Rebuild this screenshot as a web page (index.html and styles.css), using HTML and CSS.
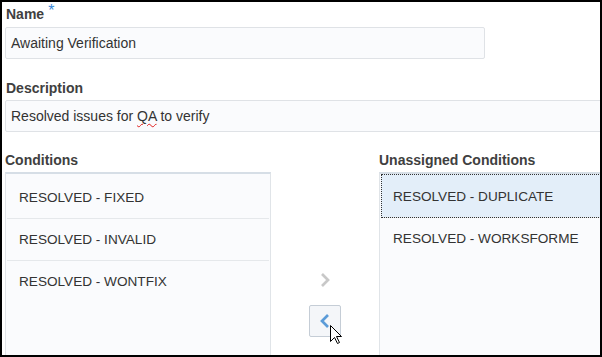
FILE: index.html
```html
<!DOCTYPE html>
<html lang="en">
<head>
    <meta charset="UTF-8">
    <title>Edit Status</title>
    <link rel="stylesheet" href="styles.css">
</head>
<body>
    <div class="frame">
        <div class="form">
            <label class="field-label">Name<span class="req">*</span></label>
            <div class="text-input name-input">Awaiting Verification</div>

            <label class="field-label desc-label">Description</label>
            <div class="text-input desc-input">Resolved issues for <span class="misspelt">QA</span> to verify</div>

            <div class="shuttle">
                <div class="list-label">Conditions</div>
                <div></div>
                <div class="list-label">Unassigned Conditions</div>

                <ul class="cond-list">
                    <li>RESOLVED - FIXED</li>
                    <li>RESOLVED - INVALID</li>
                    <li>RESOLVED - WONTFIX</li>
                </ul>

                <div class="shuttle-buttons">
                    <button class="move-btn">
                        <svg width="30" height="30" viewBox="0 0 30 30"><polyline points="12,9 18,15 12,21" fill="none" stroke="#c8c8c8" stroke-width="2.7"/></svg>
                    </button>
                    <button class="move-btn active">
                        <svg width="30" height="30" viewBox="0 0 30 30"><polyline points="18,9 12,15 18,21" fill="none" stroke="#5b9bd8" stroke-width="2.7"/></svg>
                        <!-- mouse pointer -->
                        <svg class="cursor" width="13" height="20" viewBox="0 0 13 20"><path d="M0.5 0.5 L0.5 16.5 L4.5 12.5 L7.5 18.5 L9.5 17.5 L6.5 11.5 L11.5 11.5 Z" fill="#fff" stroke="#000" stroke-width="1"/></svg>
                    </button>
                </div>

                <ul class="cond-list has-selection">
                    <li class="selected">RESOLVED - DUPLICATE</li>
                    <li>RESOLVED - WORKSFORME</li>
                </ul>
            </div>
        </div>
    </div>
</body>
</html>
```

FILE: styles.css
```css
body {
    margin: 0;
    font-family: "Liberation Sans", Arial, sans-serif;
    background: #fff;
}

.frame {
    width: 602px;
    height: 357px;
    box-sizing: border-box;
    border: 2px solid #000;
    overflow: hidden;
    background: #fff;
}

.form {
    width: 1000px;
    padding: 4px 0 0 3px;
}

.field-label,
.list-label {
    display: block;
    font-size: 14px;
    font-weight: bold;
    line-height: 16px;
    color: #404040;
    padding-left: 1px;
}

.req {
    color: #3a88d8;
    font-size: 16px;
    font-weight: normal;
    line-height: 0;
    margin-left: 4px;
    vertical-align: 3px;
}

.text-input {
    box-sizing: border-box;
    height: 32px;
    padding: 0 5px;
    border: 1px solid #dfe2e6;
    border-radius: 2px;
    background: #fafbfd;
    font-size: 14px;
    line-height: 30px;
    color: #333;
}

.name-input {
    width: 480px;
    margin-top: 5px;
}

.desc-label {
    margin-top: 21px;
}

.desc-input {
    width: 900px;
    margin-top: 4px;
}

.misspelt {
    text-decoration: underline wavy #e02020;
    text-decoration-thickness: 1px;
    text-underline-offset: 2px;
}

/* shuttle: two lists with move buttons between */
.shuttle {
    display: grid;
    grid-template-columns: 266px 108px 266px;
    row-gap: 4px;
    margin-top: 20px;
}

.list-label {
    padding-left: 0;
}

.cond-list {
    list-style: none;
    margin: 0;
    padding: 3px 1px 0;
    height: 200px;
    box-sizing: border-box;
    background: #fafbfd;
    border: 1px solid #e0e4e8;
    border-top: 2px solid #d6dee6;
}

.cond-list li {
    height: 41px;
    line-height: 41px;
    padding-left: 12px;
    border-bottom: 1px solid #e5e8eb;
    font-size: 13.6px;
    color: #333;
}

.cond-list li:last-child {
    border-bottom: none;
}

.cond-list.has-selection {
    padding-top: 0;
}

.cond-list li.selected {
    height: 40px;
    line-height: 40px;
    padding-top: 3px;
    background: #e3eef9;
    outline: 1px dotted #333;
    outline-offset: -1px;
}

.shuttle-buttons {
    display: flex;
    flex-direction: column;
    align-items: center;
    gap: 9px;
    padding-top: 92px;
}

.move-btn {
    position: relative;
    display: flex;
    width: 32px;
    height: 32px;
    box-sizing: border-box;
    padding: 0;
    border: 1px solid transparent;
    border-radius: 2px;
    background: none;
}

.move-btn.active {
    border-color: #c5cdd6;
    background: #f4f6f9;
}

.cursor {
    position: absolute;
    left: 20px;
    top: 19px;
}
```
